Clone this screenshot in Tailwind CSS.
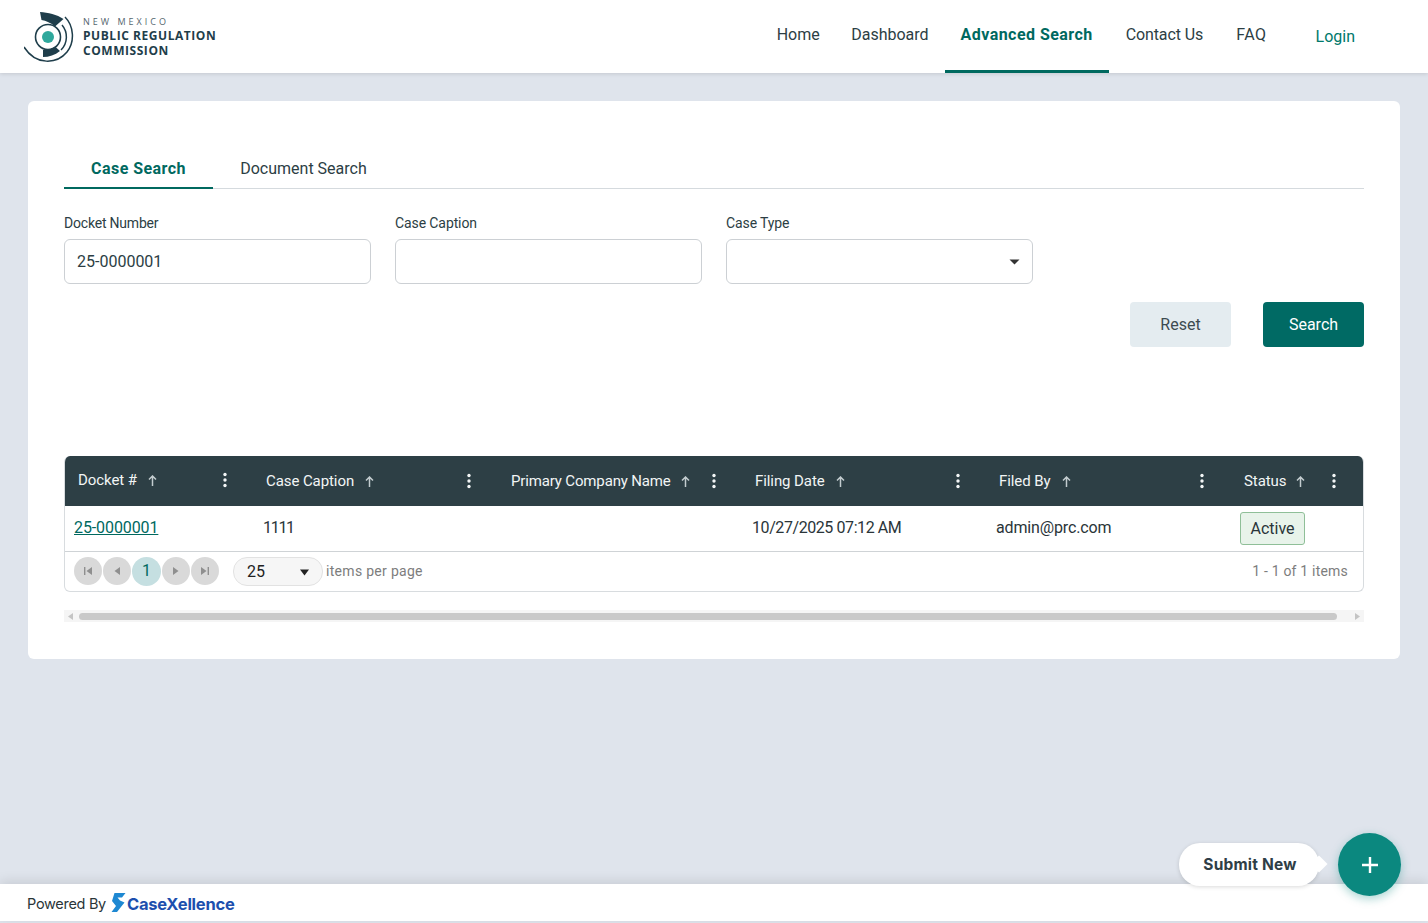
<!DOCTYPE html>
<html lang="en">
<head>
    <meta charset="UTF-8">
    <title>Advanced Search</title>
    <script src="https://cdn.jsdelivr.net/npm/@tailwindcss/browser@4"></script>
</head>
<body class="relative h-[923px] overflow-hidden bg-[#dfe4ec] font-['Roboto',sans-serif] text-[#2c3e44]">
    <!-- top nav -->
    <header class="flex h-[73px] items-stretch justify-between bg-white pl-[24px] shadow-[0_1px_4px_rgba(0,0,0,0.12)]">
        <div class="flex items-center gap-[9px]">
            <svg width="50" height="53" viewBox="0 0 50 53" fill="none" class="mt-[-1px]">
                <path d="M16 2C24 2.5 33 4.5 39.5 9L31 16.5C27 13 22 10.5 17.5 10Z" fill="#1f3e4b"/>
                <path d="M41 7C50 16 51 32 43 42C33 54 12 56 0 37" stroke="#1f3e4b" stroke-width="1.5"/>
                <path d="M38 15C44 22 44 33 37 40" stroke="#1f3e4b" stroke-width="1.5"/>
                <path d="M19 47V40C24 40.5 28 39 31 36.5L36 41C31 45 25 47 19 47Z" fill="#1f3e4b"/>
                <circle cx="24" cy="27" r="12.5" stroke="#1f3e4b" stroke-width="1.6"/>
                <circle cx="24" cy="27" r="6" fill="#2fa89c"/>
            </svg>
            <div class="pt-[1px]">
                <div class="text-[9px] leading-[12px] tracking-[3px] text-[#55666e] font-['Open_Sans',sans-serif]">NEW MEXICO</div>
                <div class="text-[12px] leading-[15px] font-bold tracking-[0.55px] text-[#1f3e4b] font-['Open_Sans',sans-serif]">PUBLIC REGULATION</div>
                <div class="text-[12px] leading-[15px] font-bold tracking-[0.55px] text-[#1f3e4b] font-['Open_Sans',sans-serif]">COMMISSION</div>
            </div>
        </div>
        <nav class="flex items-stretch pr-[73px] text-[16px] text-[#2c3e44]">
            <a class="flex items-center pl-[16px] pr-[15.5px] pb-[4px]">Home</a>
            <a class="flex items-center px-[16px] pb-[4px]">Dashboard</a>
            <a class="flex items-center border-b-[3px] border-[#00695f] px-[16px] pb-[1px] font-bold tracking-[0.45px] text-[#00695f]">Advanced Search</a>
            <a class="flex items-center pl-[17px] pr-[17px] pb-[4px] tracking-[-0.1px]">Contact Us</a>
            <a class="flex items-center px-[16px] pb-[4px] tracking-[0.5px]">FAQ</a>
            <a class="ml-[33px] flex items-center text-[#00796b]">Login</a>
        </nav>
    </header>

    <!-- search card -->
    <main class="mx-[28px] mt-[28px] h-[558px] rounded-[6px] bg-white px-[36px] pt-[49px]">
        <div class="flex h-[39px] border-b border-[#d5dade] text-[16px]">
            <div class="flex h-[39px] w-[149px] items-center justify-center border-b-2 border-[#00695f] pt-[1px] font-bold tracking-[0.45px] text-[#00695f]">Case Search</div>
            <div class="flex h-[38px] w-[181px] items-center justify-center text-[#2c3e44]">Document Search</div>
        </div>

        <div class="mt-[25px] flex gap-[24px] text-[14px] tracking-[-0.1px]">
            <div class="w-[307px]">
                <label class="block leading-[18px] tracking-[-0.2px]">Docket Number</label>
                <div class="mt-[7px] flex h-[45px] items-center rounded-[6px] border border-[#ccd0d4] px-[12px] text-[16px] tracking-normal">25-0000001</div>
            </div>
            <div class="w-[307px]">
                <label class="block leading-[18px]">Case Caption</label>
                <div class="mt-[7px] h-[45px] rounded-[6px] border border-[#ccd0d4]"></div>
            </div>
            <div class="w-[307px]">
                <label class="block leading-[18px]">Case Type</label>
                <div class="mt-[7px] flex h-[45px] items-center justify-end rounded-[6px] border border-[#ccd0d4] pr-[12px]">
                    <svg width="11" height="6" viewBox="0 0 11 6"><path d="M0.5 0.5h10l-5 5z" fill="#333"/></svg>
                </div>
            </div>
        </div>

        <div class="mt-[18px] flex justify-end gap-[32px] text-[16px]">
            <button class="h-[45px] w-[101px] rounded-[4px] bg-[#e4ecf0] text-[#3d4b50]">Reset</button>
            <button class="h-[45px] w-[101px] rounded-[4px] bg-[#006a64] text-white">Search</button>
        </div>

        <!-- results grid -->
        <div class="mt-[109px] overflow-hidden rounded-[6px] border border-[#d8dcdf] border-t-0 text-[16px]">
            <div class="grid h-[50px] grid-cols-[188px_244px_244px_244px_245px_133px] items-center bg-[#2d3f45] text-[15px] tracking-[-0.08px] text-[#f2f5f5]">
                <div class="flex items-center justify-between pl-[13px] pr-[26px] pb-[2px]">
                    <span class="flex items-center gap-[11px]">Docket #
                        <svg width="9" height="11" viewBox="0 0 9 11" fill="none" stroke="#c3cccf" stroke-width="1.5"><path d="M4.5 11V1M1 4.5 4.5 1 8 4.5"/></svg>
                    </span>
                    <svg width="4" height="16" viewBox="0 0 4 16" fill="#f2f5f5"><circle cx="2" cy="2.5" r="1.7"/><circle cx="2" cy="8" r="1.7"/><circle cx="2" cy="13.5" r="1.7"/></svg>
                </div>
                <div class="flex items-center justify-between pl-[13px] pr-[26px]">
                    <span class="flex items-center gap-[11px]">Case Caption
                        <svg width="9" height="11" viewBox="0 0 9 11" fill="none" stroke="#c3cccf" stroke-width="1.5"><path d="M4.5 11V1M1 4.5 4.5 1 8 4.5"/></svg>
                    </span>
                    <svg width="4" height="16" viewBox="0 0 4 16" fill="#f2f5f5"><circle cx="2" cy="2.5" r="1.7"/><circle cx="2" cy="8" r="1.7"/><circle cx="2" cy="13.5" r="1.7"/></svg>
                </div>
                <div class="flex items-center justify-between pl-[14px] pr-[25px]">
                    <span class="flex items-center gap-[10px] whitespace-nowrap tracking-[-0.15px]">Primary Company Name
                        <svg width="9" height="11" viewBox="0 0 9 11" fill="none" stroke="#c3cccf" stroke-width="1.5"><path d="M4.5 11V1M1 4.5 4.5 1 8 4.5"/></svg>
                    </span>
                    <svg width="4" height="16" viewBox="0 0 4 16" fill="#f2f5f5"><circle cx="2" cy="2.5" r="1.7"/><circle cx="2" cy="8" r="1.7"/><circle cx="2" cy="13.5" r="1.7"/></svg>
                </div>
                <div class="flex items-center justify-between pl-[14px] pr-[25px]">
                    <span class="flex items-center gap-[11px]">Filing Date
                        <svg width="9" height="11" viewBox="0 0 9 11" fill="none" stroke="#c3cccf" stroke-width="1.5"><path d="M4.5 11V1M1 4.5 4.5 1 8 4.5"/></svg>
                    </span>
                    <svg width="4" height="16" viewBox="0 0 4 16" fill="#f2f5f5"><circle cx="2" cy="2.5" r="1.7"/><circle cx="2" cy="8" r="1.7"/><circle cx="2" cy="13.5" r="1.7"/></svg>
                </div>
                <div class="flex items-center justify-between pl-[14px] pr-[26px]">
                    <span class="flex items-center gap-[11px]">Filed By
                        <svg width="9" height="11" viewBox="0 0 9 11" fill="none" stroke="#c3cccf" stroke-width="1.5"><path d="M4.5 11V1M1 4.5 4.5 1 8 4.5"/></svg>
                    </span>
                    <svg width="4" height="16" viewBox="0 0 4 16" fill="#f2f5f5"><circle cx="2" cy="2.5" r="1.7"/><circle cx="2" cy="8" r="1.7"/><circle cx="2" cy="13.5" r="1.7"/></svg>
                </div>
                <div class="flex items-center justify-between pl-[14px] pr-[27px]">
                    <span class="flex items-center gap-[10px]">Status
                        <svg width="9" height="11" viewBox="0 0 9 11" fill="none" stroke="#c3cccf" stroke-width="1.5"><path d="M4.5 11V1M1 4.5 4.5 1 8 4.5"/></svg>
                    </span>
                    <svg width="4" height="16" viewBox="0 0 4 16" fill="#f2f5f5"><circle cx="2" cy="2.5" r="1.7"/><circle cx="2" cy="8" r="1.7"/><circle cx="2" cy="13.5" r="1.7"/></svg>
                </div>
            </div>
            <div class="grid h-[46px] grid-cols-[188px_244px_244px_244px_245px_133px] items-center border-b border-[#cfd3d6] text-[#2a3539]">
                <div class="pl-[9px] pb-[1px]"><a class="tracking-[-0.1px] text-[#00695f] underline">25-0000001</a></div>
                <div class="pl-[10px] pb-[1px] tracking-[-1.3px]">1111</div>
                <div></div>
                <div class="pl-[11px] pb-[1px] tracking-[-0.42px]">10/27/2025 07:12 AM</div>
                <div class="pl-[11px] pb-[1px] tracking-[-0.15px]">admin@prc.com</div>
                <div class="pl-[10px]"><span class="inline-flex h-[33px] w-[65px] items-center justify-center rounded-[3px] border border-[#8fbf98] bg-[#e8f3ea]">Active</span></div>
            </div>
            <div class="flex h-[39px] items-center justify-between pl-[9px] pr-[15px] text-[14px] text-[#7d7d7d]">
                <div class="flex items-center">
                    <div class="flex gap-[1px]">
                        <span class="flex size-[28px] items-center justify-center rounded-full bg-[#d9d9d9]"><svg width="10" height="10" viewBox="0 0 10 10" fill="#8f8f8f"><path d="M1 1h1.4v8H1zM9 1v8L3.5 5z"/></svg></span>
                        <span class="flex size-[28px] items-center justify-center rounded-full bg-[#d9d9d9]"><svg width="10" height="10" viewBox="0 0 10 10" fill="#8f8f8f"><path d="M8 1v8L2.5 5z"/></svg></span>
                        <span class="flex size-[29px] items-center justify-center rounded-full bg-[#c5dfe1] pb-[2px] text-[16px] text-[#00695f]">1</span>
                        <span class="flex size-[28px] items-center justify-center rounded-full bg-[#d9d9d9]"><svg width="10" height="10" viewBox="0 0 10 10" fill="#8f8f8f"><path d="M2 1v8L7.5 5z"/></svg></span>
                        <span class="flex size-[28px] items-center justify-center rounded-full bg-[#d9d9d9]"><svg width="10" height="10" viewBox="0 0 10 10" fill="#8f8f8f"><path d="M1 1v8L6.5 5zM7.6 1H9v8H7.6z"/></svg></span>
                    </div>
                    <div class="ml-[14px] flex h-[29px] w-[90px] items-center justify-between rounded-[14px] border border-[#e2e2e2] bg-[#f6f6f6] pl-[13px] pr-[13px] pt-[1px] text-[16px] text-[#222]">
                        25
                        <svg width="9" height="7" viewBox="0 0 9 7"><path d="M0 0.5h9L4.5 6.5z" fill="#222"/></svg>
                    </div>
                    <span class="ml-[3px] tracking-[0.3px]">items per page</span>
                </div>
                <span class="tracking-[0.2px]">1 - 1 of 1 items</span>
            </div>
        </div>

        <!-- horizontal scrollbar -->
        <div class="mt-[18px] flex h-[12px] items-center bg-[#f5f5f5] px-[4px]">
            <svg width="5" height="7" viewBox="0 0 5 7"><path d="M5 0v7L0 3.5z" fill="#c4c4c4"/></svg>
            <div class="ml-[6px] h-[7px] w-[1258px] rounded-[4px] bg-[#c9c9c9]"></div>
            <svg width="5" height="7" viewBox="0 0 5 7" class="ml-auto"><path d="M0 0v7l5-3.5z" fill="#c4c4c4"/></svg>
        </div>
    </main>

    <!-- footer -->
    <footer class="absolute bottom-[2px] left-0 right-0 flex h-[37px] items-center bg-white pl-[27px] pt-[2px] shadow-[0_-3px_12px_rgba(0,0,0,0.1)]">
        <span class="text-[14.5px] text-[#2a3539] font-['Inter',sans-serif] tracking-[-0.3px]">Powered By</span>
        <svg width="15" height="19" viewBox="0 0 15 19" class="ml-[5px] mb-[3px]"><path d="M3.5 0H14.5L11 4.5H6.5L9 7.5 13.5 9.5 6 19H0.5L5 13 1 8Z" fill="#1e88d2"/></svg>
        <span class="ml-[1px] mt-[2px] text-[16.5px] font-bold tracking-[-0.25px] text-[#1d4fae] font-['Inter',sans-serif]">CaseXellence</span>
    </footer>

    <!-- submit new floating action -->
    <div class="absolute bottom-[27px] right-[27px] flex items-center">
        <div class="relative mr-[19px] flex h-[43px] w-[140px] items-center justify-center rounded-[21px] bg-white pl-[2px] text-[15.5px] font-bold tracking-[0.2px] text-[#2f3e46] shadow-[0_1px_4px_rgba(0,0,0,0.15)] font-['Inter',sans-serif]">
            Submit New
            <span class="absolute right-[-6px] top-[15px] size-[12px] rotate-45 bg-white"></span>
        </div>
        <div class="flex size-[63px] items-center justify-center rounded-full bg-[#0b887f] shadow-[0_3px_10px_rgba(11,136,127,0.35)]">
            <svg width="18" height="18" viewBox="0 0 18 18" stroke="white" stroke-width="2.4"><path d="M9 1v16M1 9h16"/></svg>
        </div>
    </div>
</body>
</html>
